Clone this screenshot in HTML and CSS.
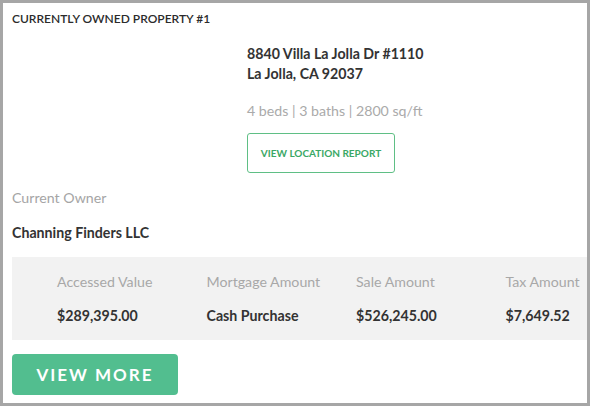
FILE: index.html
```html
<!DOCTYPE html>
<html lang="en">
<head>
    <meta charset="UTF-8">
    <meta name="viewport" content="width=device-width, initial-scale=1.0">
    <title>Owned Property</title>
    <link rel="stylesheet" href="styles.css">
</head>
<body>
    <div class="frame">
        <h2 class="section-title">CURRENTLY OWNED PROPERTY #1</h2>

        <div class="property">
            <p class="address">8840 Villa La Jolla Dr #1110<br>La Jolla, CA 92037</p>
            <p class="specs">4 beds | 3 baths | 2800 sq/ft</p>
            <button class="outline-button">VIEW LOCATION REPORT</button>
        </div>

        <p class="label">Current Owner</p>
        <p class="owner">Channing Finders LLC</p>

        <div class="figures">
            <div class="figure">
                <span class="figure-label">Accessed Value</span>
                <span class="figure-value">$289,395.00</span>
            </div>
            <div class="figure">
                <span class="figure-label">Mortgage Amount</span>
                <span class="figure-value">Cash Purchase</span>
            </div>
            <div class="figure">
                <span class="figure-label">Sale Amount</span>
                <span class="figure-value">$526,245.00</span>
            </div>
            <div class="figure">
                <span class="figure-label">Tax Amount</span>
                <span class="figure-value">$7,649.52</span>
            </div>
        </div>

        <button class="solid-button">VIEW MORE</button>
    </div>
</body>
</html>
```

FILE: styles.css
```css
body {
    margin: 0;
    font-family: Lato, "Open Sans", sans-serif;
    color: #333;
    background-color: #a6a6a6;
}

.frame {
    box-sizing: border-box;
    height: 400px;
    margin: 3px 3px 0 3px;
    padding: 8px 0 0 9px;
    background: white;
    overflow: hidden;
}

.section-title {
    margin: 0;
    font-size: 12px;
    font-weight: 600;
    line-height: 16px;
    color: #2b2b2b;
}

.property {
    display: flex;
    flex-direction: column;
    align-items: flex-start;
    padding-left: 235px;
    margin-top: 17px;
}

.address {
    margin: 0;
    font-size: 14.2px;
    font-weight: 700;
    line-height: 20px;
}

.specs {
    margin: 17px 0 0 0;
    font-size: 14.2px;
    line-height: 20px;
    color: #aaa;
}

.outline-button {
    margin-top: 12px;
    width: 148px;
    height: 40px;
    background: white;
    border: 1px solid #5fbf85;
    border-radius: 3px;
    color: #3aa865;
    font-family: inherit;
    font-size: 10px;
    font-weight: 700;
    cursor: pointer;
}

.label {
    margin: 15px 0 0 0;
    font-size: 14.2px;
    line-height: 20px;
    color: #a5a5a5;
}

.owner {
    margin: 15px 0 0 0;
    font-size: 14.2px;
    font-weight: 700;
    line-height: 20px;
}

.figures {
    display: grid;
    grid-template-columns: repeat(4, 149.5px);
    margin-top: 14px;
    padding: 15px 0 14px 45px;
    background: #f2f2f2;
}

.figure {
    display: flex;
    flex-direction: column;
    gap: 14px;
    white-space: nowrap;
}

.figure-label {
    font-size: 14.2px;
    line-height: 20px;
    color: #a8a8a8;
}

.figure-value {
    font-size: 14.2px;
    font-weight: 700;
    line-height: 20px;
}

.solid-button {
    display: block;
    margin-top: 14px;
    width: 166px;
    height: 41px;
    background: #52be8f;
    border: none;
    border-radius: 4px;
    color: white;
    font-family: inherit;
    font-size: 17px;
    font-weight: 700;
    letter-spacing: 2px;
    cursor: pointer;
}
```
